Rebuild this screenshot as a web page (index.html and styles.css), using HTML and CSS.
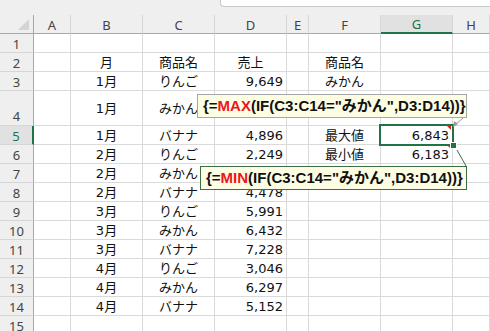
FILE: index.html
```html
<!DOCTYPE html>
<html lang="ja">
<head>
    <meta charset="UTF-8">
    <title>配列数式</title>
    <link rel="stylesheet" href="styles.css">
</head>
<body>

    <!-- formula bar edge -->
    <div class="topbar"><div class="fbar"></div></div>

    <div class="sheet">
        <!-- column headers -->
        <div class="corner"><span class="tri"></span></div>
        <div class="ch">A</div><div class="ch">B</div><div class="ch">C</div><div class="ch">D</div>
        <div class="ch">E</div><div class="ch">F</div><div class="ch sel">G</div><div class="ch">H</div>

        <div class="rh">1</div><div class="c"></div><div class="c"></div><div class="c"></div><div class="c"></div><div class="c"></div><div class="c"></div><div class="c"></div><div class="c"></div>
        <div class="rh">2</div><div class="c"></div><div class="c ctr">月</div><div class="c ctr">商品名</div><div class="c ctr">売上</div><div class="c"></div><div class="c ctr">商品名</div><div class="c"></div><div class="c"></div>
        <div class="rh">3</div><div class="c"></div><div class="c ctr">1月</div><div class="c ctr">りんご</div><div class="c num">9,649</div><div class="c"></div><div class="c ctr">みかん</div><div class="c"></div><div class="c"></div>
        <div class="rh tall">4</div><div class="c"></div><div class="c ctr">1月</div><div class="c ctr">みかん</div><div class="c num">6,843</div><div class="c"></div><div class="c"></div><div class="c"></div><div class="c"></div>
        <div class="rh sel">5</div><div class="c"></div><div class="c ctr">1月</div><div class="c ctr">バナナ</div><div class="c num">4,896</div><div class="c"></div><div class="c ctr">最大値</div><div class="c num note">6,843</div><div class="c"></div>
        <div class="rh">6</div><div class="c"></div><div class="c ctr">2月</div><div class="c ctr">りんご</div><div class="c num">2,249</div><div class="c"></div><div class="c ctr">最小値</div><div class="c num note">6,183</div><div class="c"></div>
        <div class="rh">7</div><div class="c"></div><div class="c ctr">2月</div><div class="c ctr">みかん</div><div class="c num">6,183</div><div class="c"></div><div class="c"></div><div class="c"></div><div class="c"></div>
        <div class="rh">8</div><div class="c"></div><div class="c ctr">2月</div><div class="c ctr">バナナ</div><div class="c num">4,478</div><div class="c"></div><div class="c"></div><div class="c"></div><div class="c"></div>
        <div class="rh">9</div><div class="c"></div><div class="c ctr">3月</div><div class="c ctr">りんご</div><div class="c num">5,991</div><div class="c"></div><div class="c"></div><div class="c"></div><div class="c"></div>
        <div class="rh">10</div><div class="c"></div><div class="c ctr">3月</div><div class="c ctr">みかん</div><div class="c num">6,432</div><div class="c"></div><div class="c"></div><div class="c"></div><div class="c"></div>
        <div class="rh">11</div><div class="c"></div><div class="c ctr">3月</div><div class="c ctr">バナナ</div><div class="c num">7,228</div><div class="c"></div><div class="c"></div><div class="c"></div><div class="c"></div>
        <div class="rh">12</div><div class="c"></div><div class="c ctr">4月</div><div class="c ctr">りんご</div><div class="c num">3,046</div><div class="c"></div><div class="c"></div><div class="c"></div><div class="c"></div>
        <div class="rh">13</div><div class="c"></div><div class="c ctr">4月</div><div class="c ctr">みかん</div><div class="c num">6,297</div><div class="c"></div><div class="c"></div><div class="c"></div><div class="c"></div>
        <div class="rh">14</div><div class="c"></div><div class="c ctr">4月</div><div class="c ctr">バナナ</div><div class="c num">5,152</div><div class="c"></div><div class="c"></div><div class="c"></div><div class="c"></div>
        <div class="rh">15</div><div class="c"></div><div class="c"></div><div class="c"></div><div class="c"></div><div class="c"></div><div class="c"></div><div class="c"></div><div class="c"></div>

        <!-- selection on G5 -->
        <div class="selbox"></div>
        <div class="handle"></div>

        <!-- callout connectors -->
        <svg class="links" width="490" height="320" viewBox="0 0 490 320">
            <line x1="463" y1="103" x2="455" y2="110" stroke="#9a9a9a" stroke-width="1"/>
            <polygon points="453,112 454,106 458,109" fill="#9a9a9a"/>
            <line x1="457" y1="135" x2="466" y2="151" stroke="#3d6e45" stroke-width="1"/>
        </svg>

        <div class="callout max">{=<b>MAX</b>(IF(C3:C14="みかん",D3:D14))}</div>
        <div class="callout min">{=<b>MIN</b>(IF(C3:C14="みかん",D3:D14))}</div>
    </div>

</body>
</html>
```

FILE: styles.css
```css
body {
    margin: 0;
    background-color: #ffffff;
    font-family: 'DejaVu Sans', 'Noto Sans CJK JP', sans-serif;
    overflow: hidden;
}

.topbar {
    height: 15px;
    background-color: #efefef;
}

.fbar {
    margin-left: 220px;
    height: 7px;
    background-color: #ffffff;
    border: 1px solid #c8c8c8;
    border-top: none;
    border-right: none;
    border-bottom-left-radius: 4px;
    box-sizing: border-box;
}

.sheet {
    position: relative;
    display: grid;
    grid-template-columns: 34px 37px 72px 72px 72px 22px 72px 72px 1fr;
    grid-template-rows: 19px repeat(3, 19px) 35px repeat(11, 19px);
}

/* header cells */
.corner, .ch, .rh {
    background-color: #efefef;
    color: #444444;
    font-family: 'Noto Sans', 'Liberation Sans', sans-serif;
    font-size: 13px;
    box-sizing: border-box;
    display: flex;
    align-items: center;
    justify-content: center;
}

.corner {
    position: relative;
    border-right: 1px solid #a8a8a8;
    border-bottom: 1px solid #a8a8a8;
}

.corner .tri {
    position: absolute;
    right: 4px;
    bottom: 3px;
    width: 0;
    height: 0;
    border-left: 11px solid transparent;
    border-bottom: 11px solid #d4d4d4;
}

.ch {
    border-right: 1px solid #d6d6d6;
    border-bottom: 1px solid #a8a8a8;
    padding-top: 1px;
}

.ch.sel {
    background-color: #e1e1e1;
    color: #217346;
    border-bottom: 2px solid #217346;
}

.rh {
    border-right: 1px solid #a8a8a8;
    border-bottom: 1px solid #d6d6d6;
    padding-top: 1px;
}

.rh.tall {
    align-items: flex-end;
    padding-bottom: 0;
}

.rh.sel {
    background-color: #e1e1e1;
    color: #217346;
    border-right: 2px solid #217346;
}

/* body cells */
.c {
    position: relative;
    box-sizing: border-box;
    border-right: 1px solid #dadada;
    border-bottom: 1px solid #dadada;
    font-size: 13px;
    color: #111111;
    display: flex;
    align-items: center;
    padding: 1px 4px 0 4px;
    line-height: 17px;
    white-space: nowrap;
}

.ctr {
    justify-content: center;
}

.num {
    justify-content: flex-end;
    padding-right: 3px;
}

.note::after {
    content: '';
    position: absolute;
    top: 0;
    right: 1px;
    width: 0;
    height: 0;
    border-left: 4px solid transparent;
    border-top: 4px solid #e0201c;
}

/* selection */
.selbox {
    position: absolute;
    left: 379px;
    top: 109px;
    width: 75px;
    height: 22px;
    border: 2px solid #217346;
    box-sizing: border-box;
}

.handle {
    position: absolute;
    left: 450px;
    top: 127px;
    width: 7px;
    height: 7px;
    background-color: #217346;
    border: 1px solid #ffffff;
    box-sizing: border-box;
}

.links {
    position: absolute;
    left: 0;
    top: 0;
}

/* formula callouts */
.callout {
    position: absolute;
    height: 24px;
    box-sizing: border-box;
    background-color: #fdfde4;
    font-family: 'Liberation Sans', 'Noto Sans CJK JP', sans-serif;
    font-size: 15px;
    font-weight: bold;
    color: #111111;
    padding: 0 5px;
    line-height: 22px;
    white-space: nowrap;
}

.callout b {
    color: #f0141c;
}

.callout.max {
    left: 197px;
    top: 79px;
    width: 270px;
    border: 1px solid #a6a6a6;
}

.callout.min {
    left: 200px;
    top: 151px;
    width: 267px;
    border: 1px solid #3d6e45;
}
```
